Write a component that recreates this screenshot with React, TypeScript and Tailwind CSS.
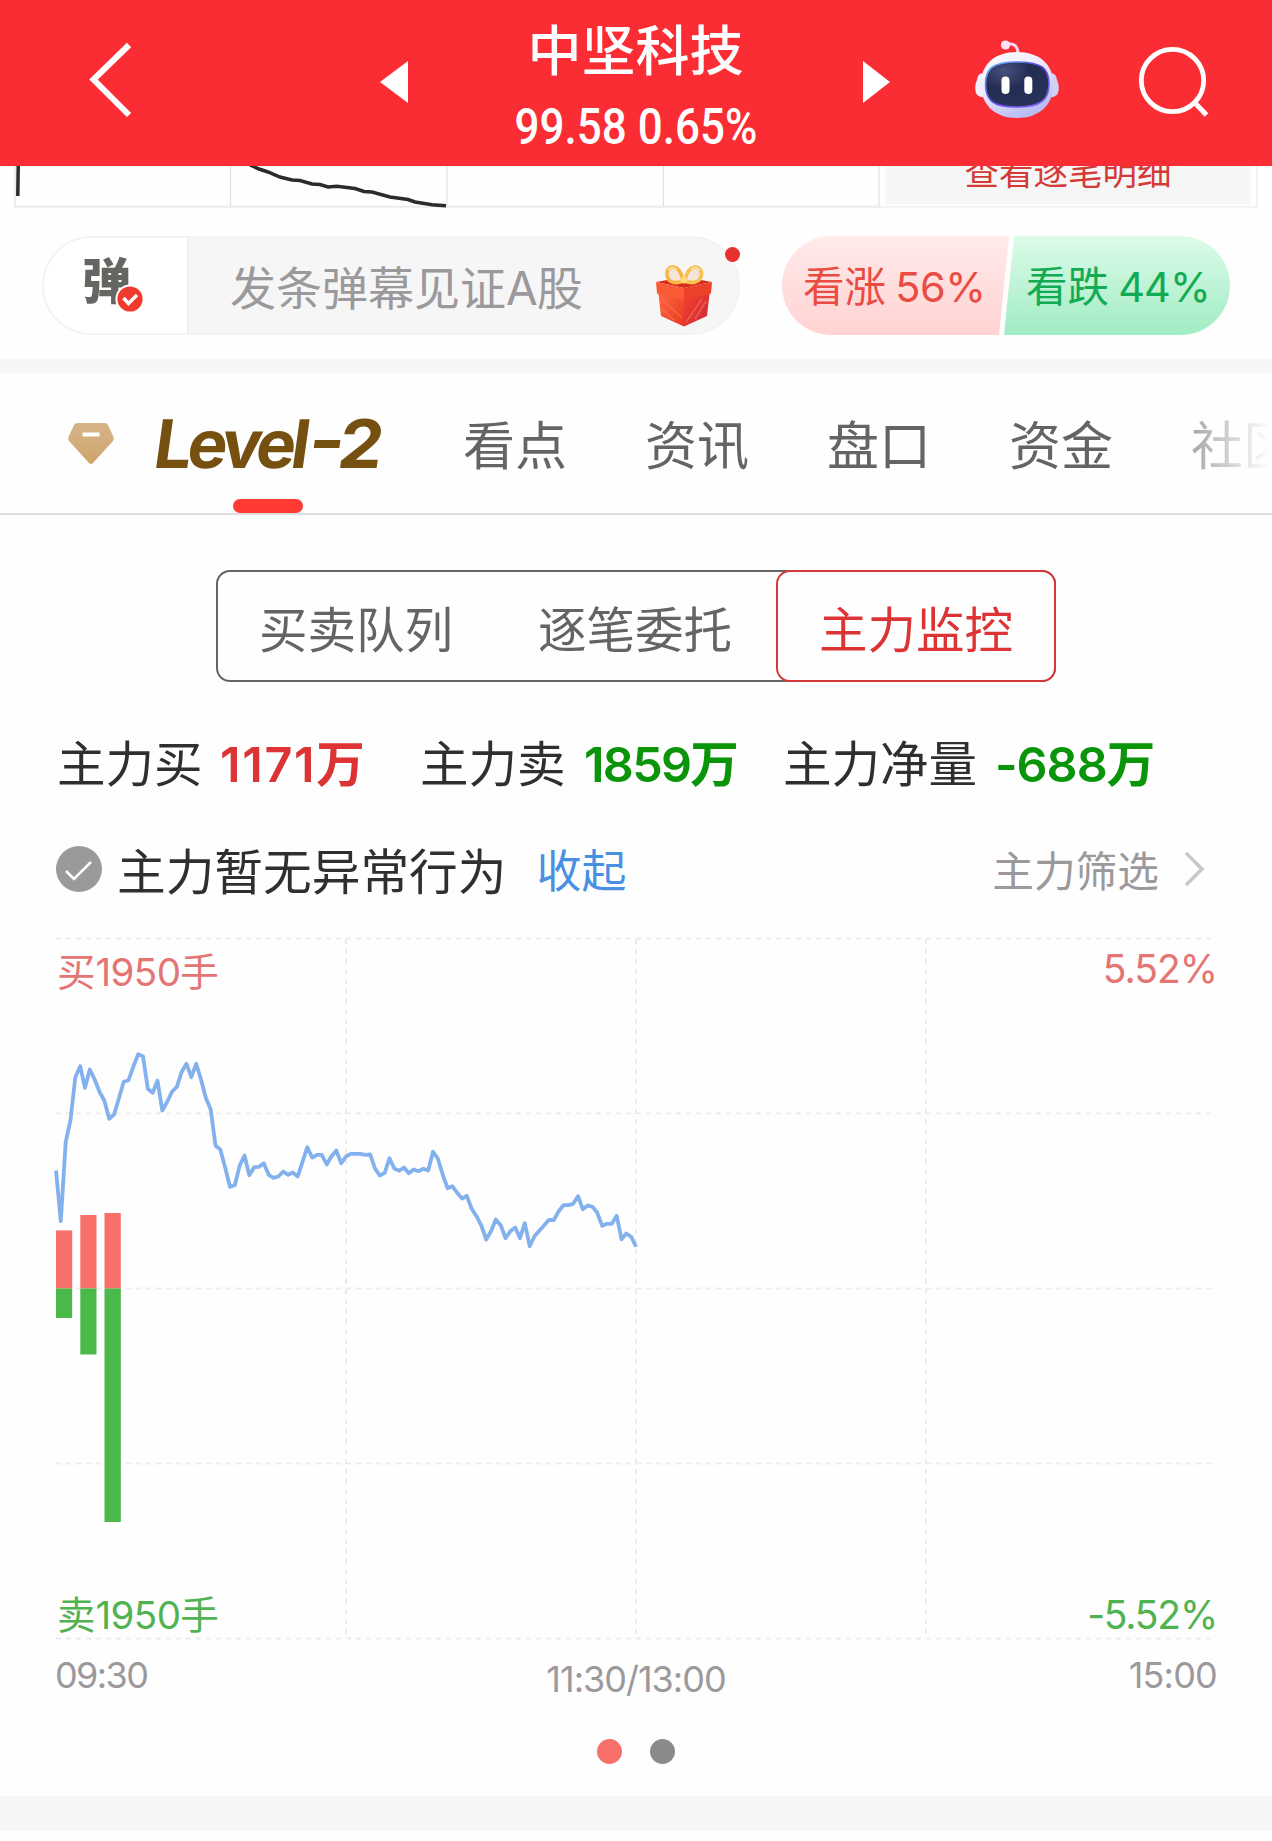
import React from "react";

const PRICE_LEVELS = [
  423, 575, 338, 272, 143, 110, 175, 120, 150, 187, 213, 268, 255, 208, 157, 152, 112, 74, 80, 178,
  190, 154, 243, 217, 187, 172, 127, 103, 143, 103, 150, 205, 240, 348, 360, 415, 472, 467, 408, 378,
  437, 413, 412, 401, 436, 445, 441, 426, 436, 429, 441, 397, 353, 384, 376, 376, 405, 380, 363, 401,
  381, 373, 373, 373, 376, 375, 417, 438, 430, 386, 417, 424, 414, 431, 420, 425, 418, 423, 367, 387,
  435, 476, 470, 490, 507, 499, 538, 560, 588, 630, 605, 570, 587, 626, 605, 594, 626, 581, 650, 620,
  604, 587, 571, 572, 545, 527, 527, 523, 500, 539, 528, 532, 550, 589, 583, 583, 559, 629, 612, 622,
  652,
];

const pricePoints = PRICE_LEVELS.map(
  (v, i) => `${(i * 4.8333).toFixed(1)},${(91.5 + v / 3).toFixed(1)}`
).join(" ");

const BARS = [
  { x: 0, w: 16.2, top: 292.4, bottom: 380 },
  { x: 24.3, w: 16.2, top: 277, bottom: 416.5 },
  { x: 48.5, w: 16.3, top: 275, bottom: 584 },
];

/** Latin digits set in a geometric face, sharing the baseline of the Chinese text. */
function Num({ children, className = "tracking-[-0.6px]" }: { children: React.ReactNode; className?: string }) {
  return <span className={`font-[Inter] leading-none ${className}`}>{children}</span>;
}

function Robot() {
  return (
    <svg width="94" height="86" viewBox="970 36 94 86" className="ml-[79px]">
      <defs>
        <linearGradient id="shell" x1="0" y1="0" x2="0.5" y2="1">
          <stop offset="0" stopColor="#fff" />
          <stop offset="0.5" stopColor="#eceafd" />
          <stop offset="1" stopColor="#b9bdf2" />
        </linearGradient>
        <linearGradient id="rim" x1="0" y1="0" x2="1" y2="1">
          <stop offset="0" stopColor="#66c8f5" />
          <stop offset="0.5" stopColor="#5b3fe0" />
          <stop offset="1" stopColor="#8a6cf5" />
        </linearGradient>
        <radialGradient id="visor" cx="0.3" cy="0.2" r="0.8">
          <stop offset="0" stopColor="#46507c" />
          <stop offset="0.5" stopColor="#232d54" />
          <stop offset="1" stopColor="#273258" />
        </radialGradient>
      </defs>
      <path d="M1006 44C1013 43 1018 45 1018 54" fill="none" stroke="#f3d8ee" strokeWidth="3" />
      <circle cx="1005.5" cy="45" r="4.6" fill="#fbe4f2" />
      <path d="M985 73C978 73 978 76 977 80Q974 86 976 93Q978 98 986 97Z" fill="#f3f0fd" />
      <path d="M1049 73C1056 73 1056 76 1057 80Q1060 86 1058 93Q1056 98 1048 97Z" fill="#d3d0f8" />
      <path
        d="M1017 52C1039 52 1053 64 1053.500 84C1053.500 105 1039 118 1017 118C995 118 981 105 981 84C981 64 995 52 1017 52Z"
        fill="url(#shell)"
      />
      <path
        d="M1017 62C1041 62 1049 68 1049 84C1049 100 1041 107 1017 107C993 107 985.500 100 985.500 84C985.500 68 993 62 1017 62Z"
        fill="url(#visor)"
        stroke="url(#rim)"
        strokeWidth="1.6"
      />
      <rect x="1001.500" y="76.500" width="8" height="17.500" rx="4" fill="#fff" />
      <rect x="1024.300" y="76.500" width="8" height="17.500" rx="4" fill="#fff" />
    </svg>
  );
}

function Gift() {
  return (
    <svg width="60" height="64" viewBox="654 264 60 64">
      <defs>
        <linearGradient id="giftLeft" x1="0" y1="0" x2="1" y2="1">
          <stop offset="0" stopColor="#ff6a45" />
          <stop offset="1" stopColor="#e8391f" />
        </linearGradient>
        <linearGradient id="giftRight" x1="0" y1="0" x2="1" y2="1">
          <stop offset="0" stopColor="#f2452a" />
          <stop offset="1" stopColor="#cf2440" />
        </linearGradient>
      </defs>
      <path d="M658 290L684 298V326.500L661 316Z" fill="url(#giftLeft)" />
      <path d="M684 298L710 290L707 316L684 326.500Z" fill="url(#giftRight)" />
      <path d="M663 300L682 318M662 309L674 320M686 322L702 299M695 319L706 301" stroke="#ff8058" strokeWidth="1.600" opacity="0.5" />
      <path d="M656 282L684 277L712 282L684 288Z" fill="#d92b1d" />
      <path d="M656 282L684 288V300L657 293.500Z" fill="#fb5a37" />
      <path d="M684 288L712 282L711 293.500L684 300Z" fill="#ee4129" />
      <path d="M683 281C680 263 666 264 667 275C668 283 676 284 683 281Z" fill="#f6e3da" stroke="#f7b543" strokeWidth="3.600" />
      <path d="M685 281C688 263 702 264 701.500 275C700 283 692 284 685 281Z" fill="#f6e3da" stroke="#f9c050" strokeWidth="3.600" />
      <path d="M668 270Q672 265 677 270M691 270Q695 265 700 270" fill="none" stroke="#ffe9a8" strokeWidth="1.500" />
      <circle cx="684" cy="280" r="3.600" fill="#ffd877" />
    </svg>
  );
}

function Header() {
  return (
    <header className="flex h-[166px] bg-[#f92d33] text-white">
      <div className="w-[380px]">
        <svg width="60" height="90" viewBox="80 36 60 90" className="mt-[36px] ml-[80px]">
          <path d="M129 45L93.500 79.500L129 115" fill="none" stroke="#fff" strokeWidth="6" />
        </svg>
      </div>
      <svg width="28" height="42" viewBox="0 0 28 42" className="mt-[61px]">
        <path d="M28 0V42L0 21Z" fill="#fff" />
      </svg>
      <div className="flex w-[455px] flex-col items-center">
        <div className="mt-[18px] h-[60px] text-[54px] leading-[60px] font-medium whitespace-nowrap">中坚科技</div>
        <div className="mt-[19px] h-[60px] origin-center scale-x-[0.88] font-[Roboto] text-[50px] leading-[60px] font-medium whitespace-nowrap">
          99.58 0.65%
        </div>
      </div>
      <svg width="28" height="42" viewBox="0 0 28 42" className="mt-[61px]">
        <path d="M0 0V42L27 21Z" fill="#fff" />
      </svg>
      <div className="mt-[36px] flex items-start">
        <Robot />
        <svg width="80" height="80" viewBox="1134 40 80 80" className="mt-[4px] ml-[70px]">
          <circle cx="1172.500" cy="80.500" r="31.200" fill="none" stroke="#fff" strokeWidth="4.800" />
          <path d="M1194 102L1206.500 115" stroke="#fff" strokeWidth="5" />
        </svg>
      </div>
    </header>
  );
}

function QuoteStrip() {
  return (
    <section className="flex h-[42px] pl-[14px]">
      <svg width="866" height="42" viewBox="14 166 866 42">
        <path d="M15 166V207M230.500 166V207M447 166V207M663.500 166V207M879 166V207" stroke="#dfdfdf" strokeWidth="1.200" />
        <path d="M14 206.700H880" stroke="#ececec" strokeWidth="2" />
        <path d="M18.200 166L17.800 196" stroke="#2b2b2b" strokeWidth="3.500" />
        <path
          d="M250 165L259 169L268 172L280 177L292 180L300 180.500L312 184L320 184.500L328 187L337 186.200L355 188.500L364 191.500L372 192L390 197L408 199.500L415 202L432 204.800L446 205.800"
          fill="none"
          stroke="#2b2b2b"
          strokeWidth="3.500"
        />
      </svg>
      <div className="h-[42px] w-[378px] overflow-hidden border-r-2 border-b-2 border-[#f3f3f3] px-[6px] pb-[2px]">
        <div className="flex h-[38px] items-end justify-center overflow-hidden bg-[#f6f6f6]">
          <span className="mb-[12px] text-[34.5px] leading-[44px] text-[#d43a36]">查看逐笔明细</span>
        </div>
      </div>
    </section>
  );
}

function DanmuRow() {
  return (
    <section className="flex h-[151px] pt-[28px] pl-[42px]">
      <div className="relative flex h-[99px] w-[698px] overflow-visible rounded-full border-2 border-[#f3f3f3] bg-[#f6f6f6]">
        <div className="relative w-[145px] rounded-l-full border-r-2 border-[#f0f0f0] bg-white">
          <span className="mt-[8px] ml-[38px] block text-[49px] leading-[64px] font-black text-[#646662]">弹</span>
          <svg width="30" height="30" viewBox="0 0 30 30" className="absolute top-[46px] left-[71px]">
            <circle cx="15" cy="15" r="13.600" fill="#f03a2d" stroke="#fff" strokeWidth="2" />
            <path d="M8.500 14L13.500 19.500L22 11" fill="none" stroke="#fff" strokeWidth="3.500" />
          </svg>
        </div>
        <span className="mt-[17px] ml-[41px] w-[424px] text-[46px] leading-[60px] whitespace-nowrap text-[#9b999b]">
          发条弹幕见证<Num className="tracking-[-1px]">A</Num>股
        </span>
        <div className="mt-[26px]">
          <Gift />
        </div>
        <span className="absolute top-[9px] right-[-2px] size-[15px] rounded-full bg-[#e93030]" />
      </div>
      <div className="ml-[42px] flex h-[99px] w-[448px] overflow-hidden rounded-full">
        <div className="w-[227px] bg-linear-to-b from-[#ffeaea] to-[#ffd3d2] pl-[21px] [clip-path:polygon(0_0,100%_0,217px_100%,0_100%)]">
          <span className="block pt-[18px] text-[41.5px] leading-[60px] whitespace-nowrap text-[#e84c43]">
            看涨 <Num className="tracking-[-0.5px]">56%</Num>
          </span>
        </div>
        <div className="-ml-[5px] w-[226px] bg-linear-to-b from-[#dcfbe9] to-[#a0ecc3] pl-[22px] [clip-path:polygon(10px_0,100%_0,100%_100%,0_100%)]">
          <span className="block pt-[18px] text-[41.5px] leading-[60px] whitespace-nowrap text-[#12aa53]">
            看跌 <Num className="tracking-[-1px]">44%</Num>
          </span>
        </div>
      </div>
    </section>
  );
}

const TABS = ["看点", "资讯", "盘口", "资金", "社区"];

function Tabs() {
  return (
    <nav className="relative flex h-[142px] overflow-hidden border-b-2 border-[#dedede]">
      <svg width="48" height="44" viewBox="0 0 48 44" className="mt-[49px] ml-[67px] shrink-0">
        <defs>
          <linearGradient id="gem" x1="0" y1="0" x2="0" y2="1">
            <stop offset="0" stopColor="#d6b488" />
            <stop offset="1" stopColor="#cfa46b" />
          </linearGradient>
        </defs>
        <path d="M10 1H38Q40 1 41 3L46.500 15Q47.500 17.500 46 19L26 41Q24 43 22 41L2 19Q.500 17.500 1.500 15L7 3Q8 1 10 1Z" fill="url(#gem)" />
        <rect x="15.500" y="10.500" width="17" height="4" fill="#fff" />
      </svg>
      <div className="ml-[39px] flex w-[229px] shrink-0 flex-col items-center">
        <div className="mt-[31px] flex origin-center -skew-x-[8deg] font-[Inter] text-[67px] leading-[80px] font-bold whitespace-nowrap text-[#765011]">
          <span className="tracking-[-4.6px]">Level</span>
          <span className="ml-[3px] w-[30px] origin-left -translate-y-[4px] scale-x-[1.15]">-</span>
          <span className="w-[43px] origin-left scale-x-[1.06]">2</span>
        </div>
        <span className="mt-[15px] -ml-[2px] h-[14px] w-[70px] rounded-full bg-[#ff3a32]" />
      </div>
      <div className="ml-[80px] flex gap-[78px] pt-[34px]">
        {TABS.map((t) => (
          <span key={t} className="w-[104px] shrink-0 text-[52px] leading-[72px] whitespace-nowrap text-[#636563]">
            {t}
          </span>
        ))}
      </div>
      <div className="absolute top-0 right-0 h-[138px] w-[140px] bg-linear-to-r from-[#fefefe]/0 to-[#fefefe] to-98%" />
    </nav>
  );
}

function Segments() {
  return (
    <div className="mt-[55px] ml-[216px] flex h-[112px] w-[840px] rounded-[14px] border-2 border-[#636563] text-[48.500px] leading-[64px] whitespace-nowrap text-[#636563]">
      <span className="w-[280px] pt-[23px] pl-[41px]">买卖队列</span>
      <span className="w-[278px] pt-[23px] pl-[40px]">逐笔委托</span>
      <span className="-my-[2px] -mr-[2px] w-[280px] rounded-[14px] border-2 border-[#d43a3a] bg-[#fefefe] pt-[23px] pl-[41px] text-[#dc3434]">主力监控</span>
    </div>
  );
}

function Totals() {
  return (
    <div className="mt-[47px] flex h-[65px] pl-[57px] text-[48.500px] leading-[64px] whitespace-nowrap text-[#2f2f2f]">
      <span className="w-[163px]">主力买</span>
      <span className="w-[200px] font-medium text-[#dc3434]">
        <Num className="font-semibold tracking-[1.7px]">1171</Num>
        <span className="font-bold">万</span>
      </span>
      <span className="w-[164px]">主力卖</span>
      <span className="w-[199px] font-bold text-[#0a940a]">
        <Num className="font-semibold tracking-[-1.7px]">1859</Num>万
      </span>
      <span className="w-[212px]">主力净量</span>
      <span className="font-bold text-[#0a940a]">
        <Num className="font-semibold tracking-[-1px]">-688</Num>万
      </span>
    </div>
  );
}

function Status() {
  return (
    <div className="mt-[43px] flex h-[64px] items-center pl-[56px] leading-[64px] whitespace-nowrap">
      <svg width="46" height="46" viewBox="0 0 46 46" className="shrink-0">
        <circle cx="23" cy="23" r="23" fill="#9b999b" />
        <path d="M10 25L18 33L35 16" fill="none" stroke="#fff" strokeWidth="2.500" />
      </svg>
      <span className="ml-[15px] text-[48.700px] text-[#2f2f2f]">主力暂无异常行为</span>
      <span className="ml-[30px] text-[45px] text-[#4a90e2]">收起</span>
      <span className="mr-[25px] ml-auto text-[41.700px] text-[#9b999b]">主力筛选</span>
      <svg width="22" height="36" viewBox="0 0 22 36" className="mr-[66px] shrink-0">
        <path d="M2 2L18 18L2 34" fill="none" stroke="#cac8ca" strokeWidth="3.500" />
      </svg>
    </div>
  );
}

function Chart() {
  return (
    <div className="relative mt-[37px] ml-[56px] h-[702px] w-[1160px]">
      <svg width="1160" height="702" viewBox="0 0 1160 702" className="overflow-visible">
        <g stroke="#ebebeb" strokeWidth="2" strokeDasharray="5 5">
          {[0.5, 175.5, 350.5, 525.5, 700.5].map((y) => (
            <path key={y} d={`M0 ${y}H1155`} />
          ))}
          {[290, 580, 870].map((x) => (
            <path key={x} d={`M${x} 1V700`} />
          ))}
        </g>
        {BARS.map((b) => (
          <g key={b.x}>
            <rect x={b.x} y={b.top} width={b.w} height={350.5 - b.top} fill="#f7706a" />
            <rect x={b.x} y={350.5} width={b.w} height={b.bottom - 350.5} fill="#4ab94a" />
          </g>
        ))}
        <polyline points={pricePoints} fill="none" stroke="#82b1ee" strokeWidth="3.800" strokeLinejoin="round" />
      </svg>
      <span className="absolute top-[6px] left-[1px] text-[38.500px] leading-[50px] text-[#e37573]">
        买<Num>1950</Num>手
      </span>
      <span className="absolute top-[3px] right-[-1px] text-[39px] leading-[50px] text-[#e37573]">
        <Num className="tracking-[-1px]">5.52%</Num>
      </span>
      <span className="absolute top-[649px] left-[1px] text-[38.500px] leading-[50px] text-[#51b251]">
        卖<Num>1950</Num>手
      </span>
      <span className="absolute top-[649px] right-[-1px] text-[39px] leading-[50px] text-[#51b251]">
        <Num className="tracking-[-1.2px]">-5.52%</Num>
      </span>
    </div>
  );
}

function Axis() {
  return (
    <div className="mt-[7px] grid h-[55px] grid-cols-3 pr-[55px] pl-[55px] text-[36px] leading-[50px] text-[#9b999b]">
      <span>
        <Num className="tracking-[-1.6px]">09:30</Num>
      </span>
      <span className="pt-[4px] text-center">
        <Num className="tracking-[-1px]">11:30/13:00</Num>
      </span>
      <span className="text-right">
        <Num className="tracking-[-0.8px]">15:00</Num>
      </span>
    </div>
  );
}

export default function App() {
  return (
    <div className="flex h-[1841px] w-[1272px] flex-col overflow-hidden bg-[#fefefe] font-['Noto_Sans_CJK_SC',sans-serif]">
      <Header />
      <QuoteStrip />
      <DanmuRow />
      <div className="h-[14px] shrink-0 bg-[#f6f6f6]" />
      <Tabs />
      <Segments />
      <Totals />
      <Status />
      <Chart />
      <Axis />
      <div className="mt-[37px] flex h-[25px] justify-center gap-[28px]">
        <span className="size-[25px] rounded-full bg-[#f7706a]" />
        <span className="size-[25px] rounded-full bg-[#8b898b]" />
      </div>
      <div className="mt-[32px] h-[35px] bg-[#f6f6f6]" />
    </div>
  );
}
